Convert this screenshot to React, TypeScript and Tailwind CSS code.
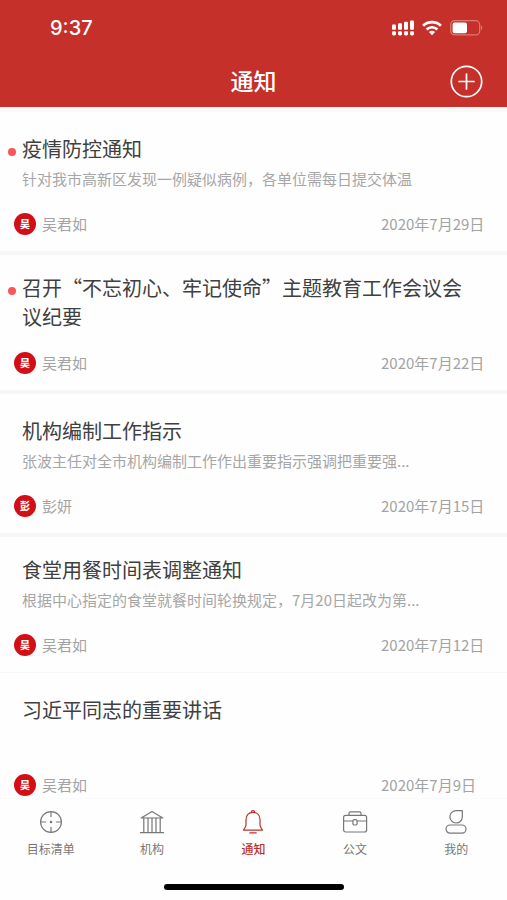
import type { ReactNode } from 'react'

type Notice = {
  title: string
  summary?: string
  author: string
  date: string
  unread?: boolean
  spacing: string
}

const NOTICES: Notice[] = [
  {
    title: '疫情防控通知',
    summary: '针对我市高新区发现一例疑似病例，各单位需每日提交体温',
    author: '吴君如',
    date: '2020年7月29日',
    unread: true,
    spacing: 'pt-[22px] border-b-4',
  },
  {
    title: '召开“不忘初心、牢记使命”主题教育工作会议会议纪要',
    author: '吴君如',
    date: '2020年7月22日',
    unread: true,
    spacing: 'pt-[18px] border-b-4',
  },
  {
    title: '机构编制工作指示',
    summary: '张波主任对全市机构编制工作作出重要指示强调把重要强...',
    author: '彭妍',
    date: '2020年7月15日',
    spacing: 'pt-[22px] border-b-4',
  },
  {
    title: '食堂用餐时间表调整通知',
    summary: '根据中心指定的食堂就餐时间轮换规定，7月20日起改为第...',
    author: '吴君如',
    date: '2020年7月12日',
    spacing: 'pt-[18px] border-b',
  },
  {
    title: '习近平同志的重要讲话',
    author: '吴君如',
    date: '2020年7月9日',
    spacing: 'pt-[22px]',
  },
]

function StatusIcons() {
  return (
    <div className="flex items-center gap-2 text-white">
      <svg width="22" height="16" viewBox="0 0 22 16" fill="currentColor" aria-hidden="true">
        <rect x="0" y="4.5" width="4" height="5.3" rx="1" />
        <rect x="6" y="3.2" width="4" height="6.6" rx="1" />
        <rect x="12" y="1.8" width="4" height="8" rx="1" />
        <rect x="18" y="0.4" width="4" height="9.4" rx="1" />
        <rect x="0" y="11.2" width="4" height="4.2" rx="1.4" />
        <rect x="6" y="11.2" width="4" height="4.2" rx="1.4" />
        <rect x="12" y="11.2" width="4" height="4.2" rx="1.4" />
        <rect x="18" y="11.2" width="4" height="4.2" rx="1.4" />
      </svg>
      <svg width="20" height="16" viewBox="0 0 20 16" fill="none" stroke="currentColor" strokeWidth="2.7" aria-hidden="true">
        <path d="M1.1 5.7C6 .9 14 .9 18.9 5.700" />
        <path d="M4.600 9.500C7.600 6.500 12.400 6.500 15.400 9.500" />
        <path d="M10 15.200 6.900 12.100C8.700 10.400 11.300 10.400 13.100 12.100Z" fill="currentColor" stroke="none" />
      </svg>
      <svg width="33" height="16" viewBox="0 0 33 16" aria-hidden="true">
        <rect x="0.700" y="0.700" width="29" height="14.200" rx="4" fill="none" stroke="#dc7a73" strokeWidth="1.200" />
        <rect x="2.600" y="2.400" width="14.400" height="10.800" rx="2" fill="#fff" />
        <path d="M31 5.500c1.600.6 1.600 4 0 4.600Z" fill="#dc7a73" />
      </svg>
    </div>
  )
}

function NavIcon({ children }: { children: ReactNode }) {
  return (
    <svg
      width="26"
      height="26"
      viewBox="0 0 26 26"
      fill="none"
      stroke="currentColor"
      strokeWidth="1.2"
      strokeLinecap="round"
      strokeLinejoin="round"
      aria-hidden="true"
    >
      {children}
    </svg>
  )
}

const TABS = [
  {
    label: '目标清单',
    icon: (
      <>
        <circle cx="13" cy="13" r="10.4" />
        <path d="M13 2.600v5M13 18.400v5M2.600 13h5M18.400 13h5" />
        <circle cx="13" cy="13" r="0.700" fill="currentColor" />
      </>
    ),
  },
  {
    label: '机构',
    icon: (
      <>
        <path d="M2.200 9 13 2.500 23.800 9Z" />
        <path d="M4.800 9v14.500M9 9v14.500M13 9v14.500M17 9v14.500M21.200 9v14.500M1.500 23.700h23" />
      </>
    ),
  },
  {
    label: '通知',
    active: true,
    icon: (
      <>
        <path d="M11.300 3.300a1.700 1.700 0 0 1 3.400 0" />
        <path d="M13 3.300c-4.400 0-7 3.100-7 7.200v5.200c0 2-1.300 3.400-2.600 5.400h19.200c-1.300-2-2.600-3.400-2.600-5.400v-5.200c0-4.100-2.600-7.200-7-7.200Z" />
        <path d="M9.800 23.900h6.400" />
      </>
    ),
  },
  {
    label: '公文',
    icon: (
      <>
        <rect x="1.600" y="6.400" width="23" height="16.600" rx="2" />
        <path d="M7 6.400V4.200Q7 2.800 8.400 2.800h9.200Q19 2.800 19 4.200v2.200M1.600 12h9.200M15.200 12h9.400" />
        <rect x="10.900" y="10.600" width="4.200" height="5.400" rx="1.600" />
      </>
    ),
  },
  {
    label: '我的',
    icon: (
      <>
        <path d="M19.300 1.600v6.300a6.200 6.200 0 1 1-6.200-6.300Z" />
        <rect x="3" y="16" width="20" height="8.200" rx="4.100" />
      </>
    ),
  },
]

function NoticeItem({ notice }: { notice: Notice }) {
  return (
    <li className={`border-[#f6f7f7] pr-6 pb-4 ${notice.spacing}`}>
      <div className="flex min-h-[79px] pl-2">
        <div className="w-[14px] shrink-0 pt-[14px]">
          {notice.unread && <span className="block size-2 rounded-full bg-[#fa5558]" />}
        </div>
        <div className="min-w-0 flex-1">
          <h2 className="pr-4 text-[20px] leading-[29px] text-[#404040]">{notice.title}</h2>
          {notice.summary && (
            <p className="mt-[5px] truncate text-[15px] leading-[22px] text-[#a6a6a6]">{notice.summary}</p>
          )}
        </div>
      </div>
      <div className="flex items-center pl-[14px] text-[15px] leading-[22px] text-[#a3a3a3]">
        <span className="flex size-[22px] items-center justify-center rounded-full bg-[#d20f16] text-[10px] font-black text-white">
          {notice.author[0]}
        </span>
        <span className="ml-1.5">{notice.author}</span>
        <time className="ml-auto w-[102px] whitespace-nowrap">{notice.date}</time>
      </div>
    </li>
  )
}

export default function App() {
  return (
    <div className="flex h-screen flex-col bg-[#fefefe] font-['Noto_Sans_CJK_SC',sans-serif]">
      <header className="bg-[#c5302a] text-white">
        <div className="flex h-14 items-center justify-between pr-6 pl-[50px]">
          <span className="font-['Inter',sans-serif] text-[20px] font-medium">9:37</span>
          <StatusIcons />
        </div>
        <div className="grid h-[51px] grid-cols-[1fr_auto_1fr] items-center pr-6">
          <h1 className="col-start-2 pb-1 pl-6 text-[23px] leading-[30px] font-medium">通知</h1>
          <button type="button" aria-label="新建通知" className="justify-self-end">
            <svg width="33" height="33" viewBox="0 0 33 33" fill="none" stroke="currentColor" strokeWidth="1.700" strokeLinecap="round">
              <circle cx="16.500" cy="16.500" r="15.200" />
              <path d="M16.500 9v15M9 16.500h15" />
            </svg>
          </button>
        </div>
      </header>

      {/* Notice list */}
      <main className="min-h-0 flex-1 overflow-y-auto border-t-5 border-[#f8f9f9] [scrollbar-width:none]">
        <ul>
          {NOTICES.map((notice) => (
            <NoticeItem key={notice.date} notice={notice} />
          ))}
        </ul>
      </main>

      {/* Tab bar */}
      <footer className="border-t border-[#fafafa] bg-[#fefefe] pt-[10px] pb-[10px]">
        <nav className="grid grid-cols-5">
          {TABS.map((tab) => (
            <a
              key={tab.label}
              href="#"
              aria-current={tab.active ? 'page' : undefined}
              className={`flex flex-col items-center gap-[5px] text-[12px] leading-[18px] ${
                tab.active ? 'font-medium text-[#b8322c]' : 'text-[#777777]'
              }`}
            >
              <NavIcon>{tab.icon}</NavIcon>
              {tab.label}
            </a>
          ))}
        </nav>
        <div className="mx-auto mt-[26px] h-[6px] w-[180px] rounded-full bg-black" />
      </footer>
    </div>
  )
}
